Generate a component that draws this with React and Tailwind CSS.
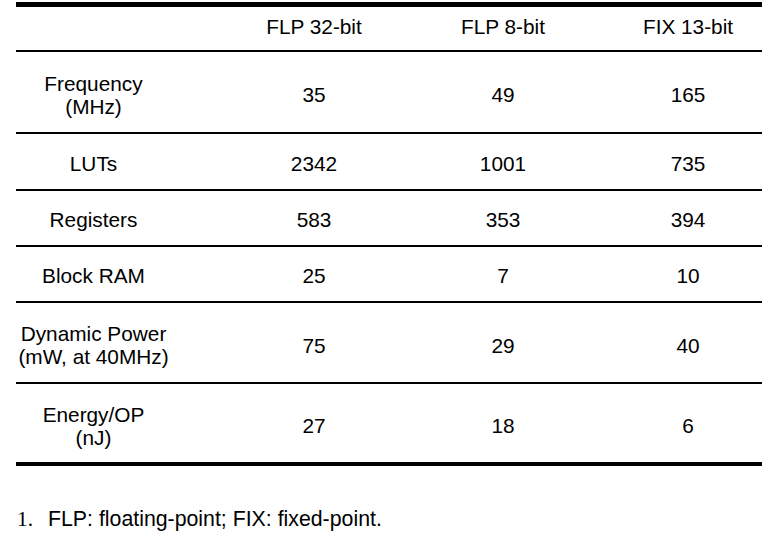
import React from "react";

const rows = [
  { label: ["Frequency", "(MHz)"], v: ["35", "49", "165"], h: "h-[80px]", two: true },
  { label: ["LUTs"], v: ["2342", "1001", "735"], h: "h-[55px]" },
  { label: ["Registers"], v: ["583", "353", "394"], h: "h-[54px]" },
  { label: ["Block RAM"], v: ["25", "7", "10"], h: "h-[54px]" },
  { label: ["Dynamic Power", "(mW, at 40MHz)"], v: ["75", "29", "40"], h: "h-[79px]", two: true },
  { label: ["Energy/OP", "(nJ)"], v: ["27", "18", "6"], h: "h-[78px]", two: true, last: true },
];

function Row({ cells, className }) {
  return (
    <div className={`grid grid-cols-[155px_243px_178px_170px] ${className}`}>
      <div className="flex flex-col items-center justify-center text-center">{cells[0]}</div>
      <div className="flex items-center justify-center pl-[43px]">{cells[1]}</div>
      <div className="flex items-center justify-center">{cells[2]}</div>
      <div className="flex items-center justify-center pl-[22px]">{cells[3]}</div>
    </div>
  );
}

export default function App() {
  return (
    <div
      className="w-[778px] h-[545px] bg-white text-black text-[20.8px] leading-[23px]"
      style={{ fontFamily: '"Liberation Sans", Arial, sans-serif' }}
    >
      <div className="pt-[2px] ml-[16px] w-[746px]">
        <div className="border-t-[5px] border-b-2 border-black">
          <Row
            className="h-[43px] pb-[5px]"
            cells={[null, "FLP 32-bit", "FLP 8-bit", "FIX 13-bit"]}
          />
        </div>
        {rows.map((r, i) => (
          <div
            key={i}
            className={r.last ? "border-b-4 border-black" : "border-b-2 border-black"}
          >
            <Row
              className={`${r.h} ${r.two ? "pt-[5px]" : "pt-[3px]"}`}
              cells={[
                r.label.map((l, j) => (
                  <div key={j} className="whitespace-nowrap">
                    {l}
                  </div>
                )),
                ...r.v,
              ]}
            />
          </div>
        ))}
      </div>
      <div className="mt-[41px] ml-[17px] flex leading-[24px] text-[21.3px]">
        <span
          className="w-[31px]"
          style={{ fontFamily: '"Liberation Serif", "Times New Roman", serif' }}
        >
          1.
        </span>
        <span>FLP: floating-point; FIX: fixed-point.</span>
      </div>
    </div>
  );
}
